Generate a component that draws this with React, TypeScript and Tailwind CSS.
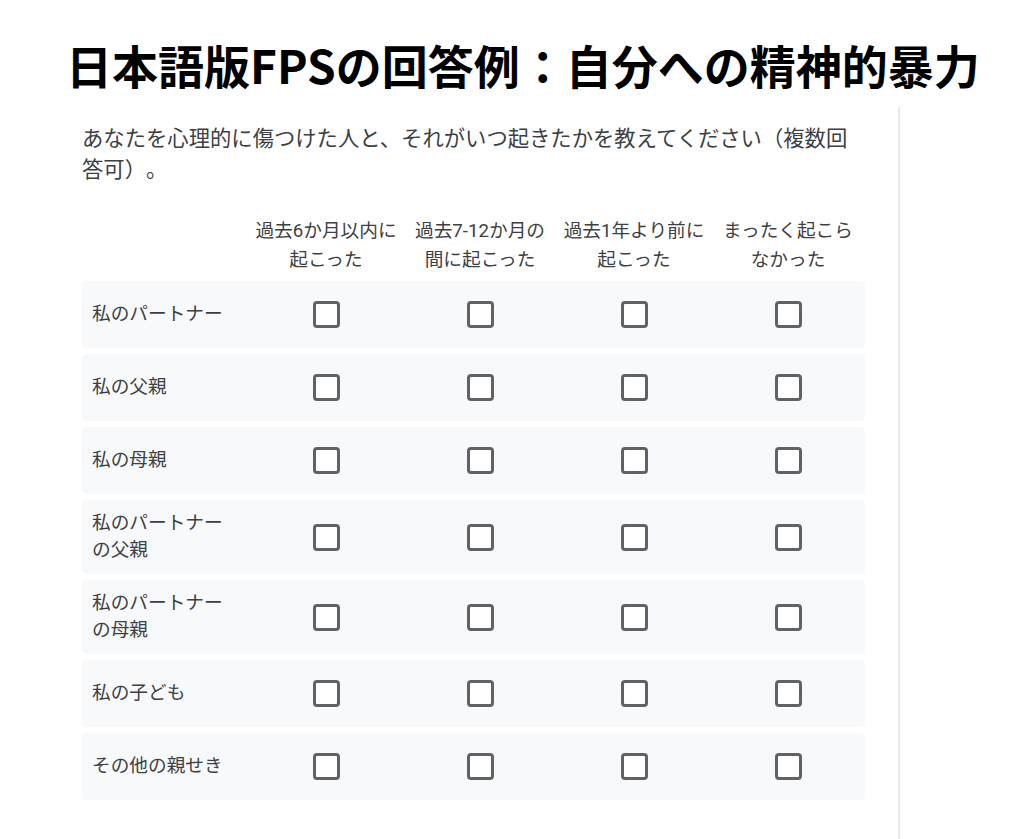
import React from "react";

const cols: React.ReactNode[] = [
  <>過去6か月以内に<br />起こった</>,
  <>過去7-12か月の<br />間に起こった</>,
  <>過去1年より前に<br />起こった</>,
  <>まったく起こら<br />なかった</>,
];

const rows: { label: React.ReactNode; tall?: boolean }[] = [
  { label: "私のパートナー" },
  { label: "私の父親" },
  { label: "私の母親" },
  { label: <>私のパートナー<br />の父親</>, tall: true },
  { label: <>私のパートナー<br />の母親</>, tall: true },
  { label: "私の子ども" },
  { label: "その他の親せき" },
];

function Box() {
  return <div className="w-[27px] h-[27px] rounded-[4px] border-[3px] border-[#5f6368] bg-white" />;
}

export default function App() {
  return (
    <div
      className="w-[1024px] h-[839px] bg-white overflow-hidden flex flex-col [text-spacing-trim:space-all]"
      style={{ fontFamily: "Roboto, 'Noto Sans CJK JP', sans-serif" }}
    >
      <div className="h-[107px] shrink-0 pl-[66px] pt-[20px] flex items-center">
        <h1
          className="text-[46px] font-bold text-black leading-none whitespace-nowrap"
          style={{ fontFamily: "'Noto Sans CJK JP', sans-serif" }}
        >
          日本語版FPSの回答例：自分への精神的暴力
        </h1>
      </div>
      <div className="flex-1 w-[900px] border-r-2 border-[#e4ebeb] pl-[82px] pr-[33px]">
        <p className="pt-[16px] text-[21.33px] leading-[31px] text-[#3c4043]">
          あなたを心理的に傷つけた人と、それがいつ起きたかを教えてください（複数回答可）。
        </p>
        <div className="mt-[32px] flex text-[18.67px] leading-[29px] text-[#3c4043] pb-[6px]">
          <div className="w-[167px] shrink-0" />
          {cols.map((c, i) => (
            <div key={i} className="w-[154px] shrink-0 text-center">
              {c}
            </div>
          ))}
        </div>
        <div className="flex flex-col gap-[6px]">
          {rows.map((r, i) => (
            <div
              key={i}
              className={`flex items-center bg-[#f8f9fa] rounded-[4px] ${r.tall ? "h-[74px]" : "h-[67px]"}`}
            >
              <div className="w-[167px] shrink-0 pl-[10px] text-[18.67px] leading-[27px] text-[#3c4043]">
                {r.label}
              </div>
              {cols.map((_, j) => (
                <div key={j} className="w-[154px] shrink-0 flex justify-center">
                  <Box />
                </div>
              ))}
            </div>
          ))}
        </div>
      </div>
    </div>
  );
}
